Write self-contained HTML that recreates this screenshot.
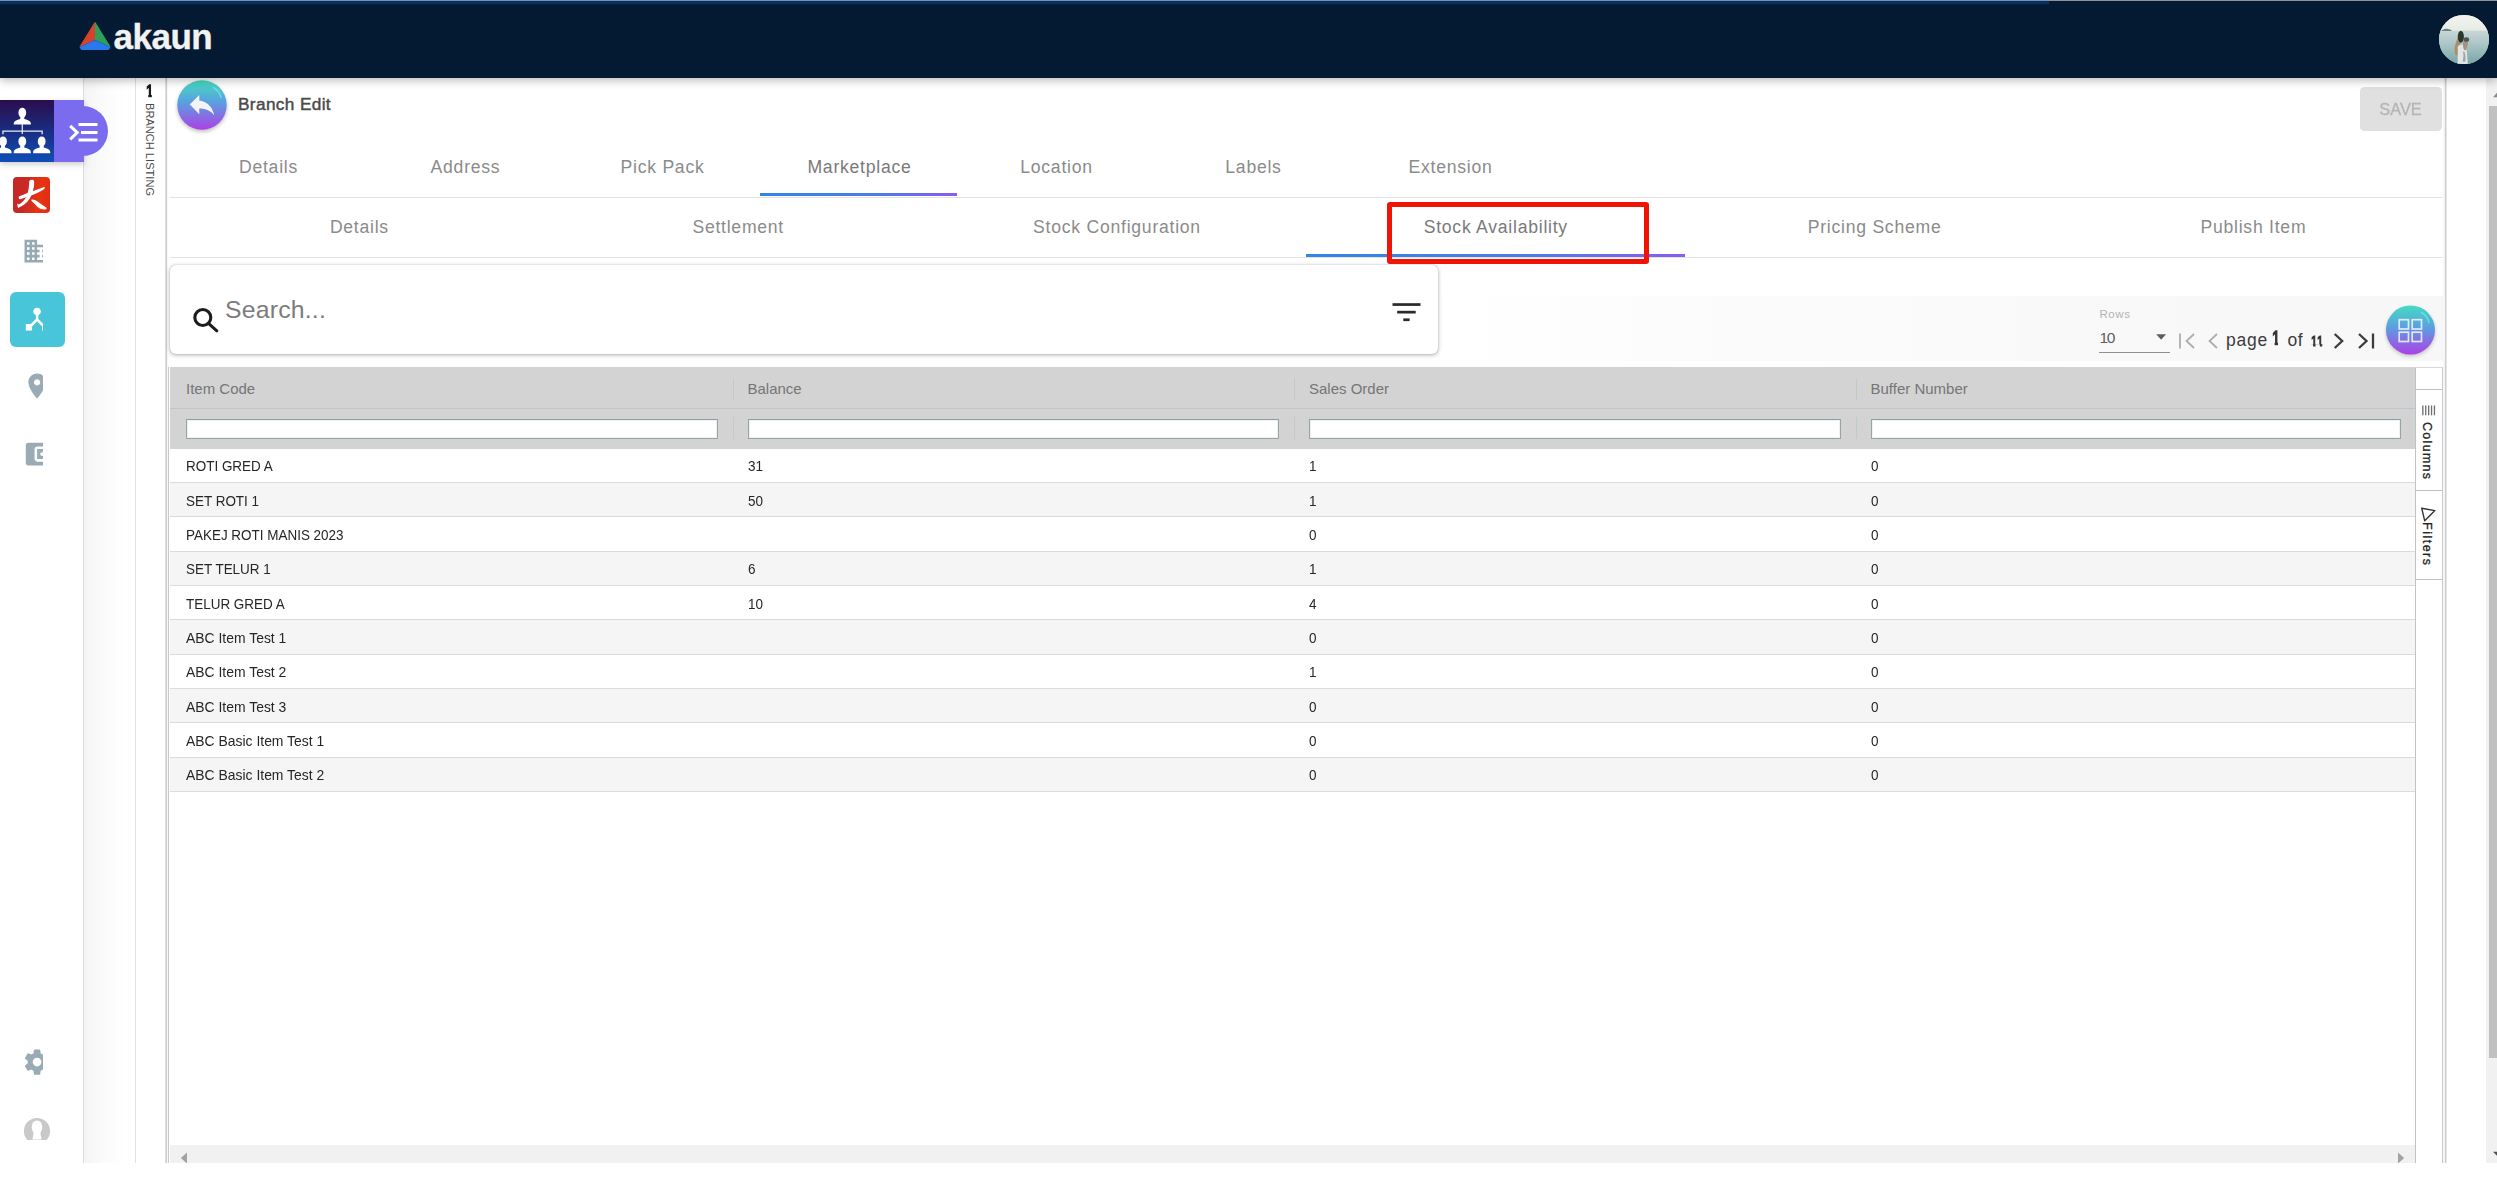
<!DOCTYPE html>
<html lang="en">
<head>
<meta charset="utf-8">
<title>akaun - Branch Edit</title>
<style>
*{box-sizing:border-box;margin:0;padding:0}
html,body{width:2497px;height:1193px;overflow:hidden;background:#fff}
body{position:relative;font-family:"Liberation Sans",sans-serif;color:#333}
.abs{position:absolute}
#app{position:absolute;left:0;top:0;width:2497px;height:1163px;overflow:hidden;background:#fff}
/* top bar */
#topbar{position:absolute;left:0;top:0;width:2497px;height:77.500px;background:#041a33;box-shadow:0 2px 9px rgba(0,0,0,.3);z-index:20}
#loadbar{position:absolute;left:0;top:0;width:2497px;height:1.200px;background:linear-gradient(90deg,#7391bb 0,#7391bb 2048px,#8d939c 2049px)}
#loadbar i{position:absolute;left:0;top:1.200px;width:2048.500px;height:4px;background:linear-gradient(180deg,#092b57 0,#0c3162 40%,#0b2e5b 70%,#051a33 100%)}
#brand{position:absolute;left:113.500px;top:15px;font-weight:bold;font-size:35px;line-height:44px;color:#f2f2f2;-webkit-text-stroke:.35px #f2f2f2;letter-spacing:-.5px}
#avatar{position:absolute;left:2439.300px;top:14.600px;width:49.300px;height:49.300px;border-radius:50%;overflow:hidden;background:#c9d3d4}
/* left rail */
#rail{position:absolute;left:0;top:77px;width:84px;height:1086px;background:#fff;border-right:1px solid #dcdcdc}
#rail2{position:absolute;left:84px;top:77px;width:51px;height:1086px;background:linear-gradient(90deg,#f4f4f4 0,#fbfbfb 20px,#fff 42px)}
#colA{position:absolute;left:135px;top:77px;width:32px;height:1086px;background:#fff;border-left:1px solid #e2e2e2}
#colAline{position:absolute;left:165px;top:77px;width:4px;height:1086px;background:linear-gradient(90deg,#e9e9e9 0,#cfcfcf 1px,#cfcfcf 1.800px,#f2f2f2 2.200px,#fff 3px)}
.vtxt{position:absolute;transform-origin:0 0;transform:rotate(90deg);white-space:nowrap}
/* main */
#main{position:absolute;left:169px;top:77px;width:2274px;height:1086px;background:#fff}
#rline{position:absolute;left:2443px;top:77px;width:4px;height:1086px;background:linear-gradient(90deg,#fafafa 0,#f0f0f0 2px,#cdcdcd 2.400px,#cdcdcd 3.400px,#fff 3.600px)}
#vscroll{position:absolute;left:2486px;top:77px;width:11px;height:1086px;background:#f1f1f1}
#vscroll i{position:absolute;left:2.500px;top:29px;width:9px;height:952px;background:#c1c1c1}
.tab{position:absolute;text-align:center;color:#8b8b8b;font-size:17.6px;letter-spacing:.75px;line-height:24px;white-space:nowrap}
.pgt{line-height:24px;color:#3c3c3c;white-space:nowrap}
.hl{position:absolute;height:1px;background:#e3e3e3}

#grid{position:absolute;left:170px;top:367px;width:2273px;height:796px;font-size:15px;color:#262626}
#ghead{position:absolute;left:0;top:0;width:2245px;height:81.500px;background:#d3d3d3}
#ghead .sep{position:absolute;left:0;top:41px;width:2245px;height:1px;background:#bcc5c9}
.hc{position:absolute;top:10.300px;height:24px;line-height:24px;color:#767676;white-space:nowrap}
.vs{position:absolute;width:1px;background:#c6c9cb}
.fi{position:absolute;top:51.500px;height:20.500px;background:#fff;border:1px solid #95a5a6;border-top-color:#8f9fa3;box-shadow:inset 0 0 0 1px #eef2f3}
.gr{position:absolute;left:0;width:2245px;height:34.350px;border-bottom:1px solid #d9dcde;background:#fff}
.gr.o{background:#f5f5f5}
.gr span{position:absolute;top:.8px;line-height:34px;white-space:nowrap;transform-origin:0 50%}
.gr .u{transform:scaleX(.897)}
.gr .m{transform:scaleX(.928)}
.gr .n{transform:scaleX(.9)}
#side{position:absolute;left:2245px;top:0;width:27.500px;height:796px;border-left:1px solid #bdc3c7;border-right:1px solid #c3c9cd;border-top:1px solid #d5d9dc;background:#fff}
#side .b{position:absolute;left:0;width:25.500px;border-bottom:1px solid #bdc3c7}
</style>
</head>
<body>
<div id="app">

<!-- TOP BAR -->
<div id="topbar">
  <div id="loadbar"><i></i></div>
  <svg class="abs" style="left:78px;top:21px" width="34" height="30" viewBox="0 0 34 30">
    <path d="M17 1.500 Q17 .6 16.200 1.800 L1.700 25.200 Q1.300 26 1.800 26 L17 19 Z" fill="#d4432a"/>
    <path d="M17 1.500 Q17 .6 17.800 1.800 L32.300 25.200 Q32.700 26 32.200 26 L17 19 Z" fill="#2e9e5b"/>
    <path d="M17 19 L32.200 26 Q32.500 26.300 32 27 L31 28.500 Q30.700 29 30 29 L4 29 Q3.300 29 3 28.500 L2 27 Q1.500 26.300 1.800 26 Z" fill="#2878ee"/>
  </svg>
  <div id="brand">akaun</div>
  <div id="avatar">
    <svg width="50" height="50" viewBox="0 0 49 49">
      <defs>
        <linearGradient id="avsky" x1="0" y1="0" x2="0" y2="1"><stop offset="0" stop-color="#f3f3ee"/><stop offset="1" stop-color="#e6ebe6"/></linearGradient>
        <linearGradient id="avsea" x1="0" y1="0" x2="0" y2="1"><stop offset="0" stop-color="#c9d8d8"/><stop offset=".35" stop-color="#aec7c9"/><stop offset=".7" stop-color="#8fb4b5"/><stop offset="1" stop-color="#78a3a1"/></linearGradient>
        <filter id="avb" x="-10%" y="-10%" width="120%" height="120%"><feGaussianBlur stdDeviation=".7"/></filter>
      </defs>
      <rect width="49" height="16" fill="url(#avsky)"/>
      <rect y="15.300" width="49" height="34" fill="url(#avsea)"/>
      <g filter="url(#avb)">
        <path d="M2 15.600c2-1.600 4.500-2.200 6.500-2 1.800.1 3.400.8 4.400 2z" fill="#6d837f"/>
        <path d="M18.500 22c-1.800 4-3.600 9-3.200 14 .2 2.600 1.600 4.200 3 3.600 1.500-3 2.300-9 3-13.600z" fill="#a98f66"/>
        <path d="M18.300 31c1-1.600 3.500-2.200 5.400-1.600 1.600.6 2.800 2 3.300 4.200l1.400 15.400h-10.400c.6-6 .4-12 .3-18z" fill="#e3e4e8"/>
        <path d="M24 25.500c1.500-.6 3.600-.3 4.300 1 .6 1.300-.2 3-.9 4.800-.5 1.500-.4 3-1.400 3.300-1.200.3-2-1.200-2.300-3-.3-2.200-.4-4.800.3-6.100z" fill="#a8917e"/>
        <ellipse cx="21.400" cy="21.300" rx="3" ry="5.900" fill="#2c382f"/>
        <ellipse cx="26.800" cy="24" rx="2.800" ry="2.300" fill="#4a5a56"/>
        <path d="M23.500 36c.8 2.600.6 6-.4 9.500l2.600.2c.6-3.400.2-7-.8-9.800z" fill="#7b8f80" opacity=".7"/>
      </g>
    </svg>
  </div>
</div>

<!-- LEFT RAIL -->
<div id="rail"></div>
<div id="rail2"></div>
<div id="colA"></div>
<div id="colAline"></div>
<div id="rline"></div>
<div id="vscroll"><i></i><svg class="abs" style="left:7px;top:14px" width="4" height="7" viewBox="0 0 4 7"><path d="M0 6.200L4 1.800V6.200z" fill="#8a8a8a"/></svg><svg class="abs" style="left:6.500px;top:1074px" width="5" height="7" viewBox="0 0 5 7"><path d="M0 .8H5V5.800z" fill="#505050"/></svg></div>


<!-- RAIL ICONS -->
<div class="abs" style="left:0;top:100px;width:84px;height:61px;box-shadow:0 3px 6px rgba(0,0,0,.22)"></div>
<div class="abs" style="left:0;top:100px;width:54px;height:61.500px;background:linear-gradient(180deg,#2b0d4d 0,#1b2a7c 45%,#0d4fb6 100%)">
  <svg width="54" height="61" viewBox="0 0 54 61" fill="#fff">
    <g id="pp"><ellipse cx="22.300" cy="12.800" rx="3.900" ry="5"/><path d="M20.300 16h4v3c2.400.7 5.300 1.500 6.100 2.900.5.900.5 2 .5 2.700H13.700c0-.7 0-1.800.5-2.700.8-1.400 3.700-2.200 6.100-2.900z"/></g>
    <use href="#pp" x="0" y="28.600"/><use href="#pp" x="-19.300" y="28.600"/><use href="#pp" x="19.400" y="28.600"/>
    <path d="M21.700 24h1.200v10h-1.200z" opacity=".9"/><path d="M2.300 30.500h40.500v3.800h-1.300v-2.500h-37.900v2.500h-1.300z" opacity=".9"/>
  </svg>
</div>
<div class="abs" style="left:54px;top:100px;width:30px;height:61.500px;background:#7b6cef"></div>
<div class="abs" style="left:58px;top:106px;width:50px;height:50px;border-radius:25px;background:#7b6cef"></div>
<svg class="abs" style="left:68px;top:121px" width="32" height="23" viewBox="0 0 32 23" fill="none" stroke="#fff" stroke-width="3">
  <path d="M2.200 4.800l7 6.800-7 6.800"/><path d="M10.500 3.500h19M13 11.600h16.500M10.500 19h19"/>
</svg>
<!-- red app icon -->
<div class="abs" style="left:13px;top:177px;width:36.500px;height:36px;border-radius:4px;background:linear-gradient(100deg,#c22727 0,#c92a25 35%,#e8340f 70%,#dc2c18 100%);overflow:hidden">
  <svg width="37" height="36" viewBox="0 0 37 36" fill="#fff">
    <path d="M17 3.200C18.500 2.200 21 2.600 21.200 4.400C21.400 8 20.500 13 18.500 18C16.500 23 12.500 27.500 7.500 29.800L5 31L4.200 27.200C4.500 26.600 5.200 26.800 5.600 27.400C8.500 26.500 12 23 13.800 18.500C15.600 14 16.200 8.500 16.200 5C16.200 4.200 16.500 3.600 17 3.200Z"/>
    <path d="M6 19.500C10 17.500 22 13.500 30.500 10.200C31.800 9.800 32.400 10.800 31.400 11.800C27 15.500 14 20.500 7.500 22.200C5.800 22.600 5 20.200 6 19.500Z"/>
    <path d="M18.800 22.600C20 22.200 22.500 23 25 24.800C28 27 31 29.200 33.200 30.600C34 31.200 33.600 32.400 32.400 32.400C29 32.600 26 31.600 24 29.400C22.400 27.600 20.600 25.600 18.800 24.200C18.200 23.600 18.200 22.900 18.800 22.600Z"/>
  </svg>
</div>
<!-- material icons, clipped -->
<svg class="abs" style="left:22.200px;top:235.600px" width="20.500" height="30.200" viewBox="0 0 16.300 24" fill="#97aab4"><path d="M12 7V3H2v18h20V7H12zM6 19H4v-2h2v2zm0-4H4v-2h2v2zm0-4H4V9h2v2zm0-4H4V5h2v2zm4 12H8v-2h2v2zm0-4H8v-2h2v2zm0-4H8V9h2v2zm0-4H8V5h2v2zm10 12h-8v-2h2v-2h-2v-2h2v-2h-2V9h8v10zm-2-8h-2v2h2v-2zm0 4h-2v2h2v-2z"/></svg>
<div class="abs" style="left:10px;top:292px;width:55px;height:55px;border-radius:6px;background:#49c5d9"></div>
<svg class="abs" style="left:22.200px;top:303.900px" width="20.500" height="30.200" viewBox="0 0 16.300 24" fill="#fff"><path d="M17 16l-4-4V8.820C14.160 8.400 15 7.300 15 6c0-1.660-1.340-3-3-3S9 4.340 9 6c0 1.300.84 2.400 2 2.820V12l-4 4H3v5h5v-3.050l4-4.200 4 4.200V21h5v-5h-4z"/></svg>
<svg class="abs" style="left:22.200px;top:370.500px" width="20.500" height="30.200" viewBox="0 0 16.300 24" fill="#9aabb5"><path d="M12 2C8.130 2 5 5.130 5 9c0 5.250 7 13 7 13s7-7.750 7-13c0-3.870-3.130-7-7-7zm0 9.500c-1.380 0-2.500-1.120-2.500-2.500s1.120-2.500 2.500-2.500 2.500 1.120 2.500 2.500-1.120 2.500-2.500 2.500z"/></svg>
<svg class="abs" style="left:22.200px;top:438.800px" width="20.500" height="30.200" viewBox="0 0 16.300 24" fill="#9aabb5"><path d="M21 18v1c0 1.100-.9 2-2 2H5c-1.110 0-2-.9-2-2V5c0-1.100.89-2 2-2h14c1.100 0 2 .9 2 2v1h-9c-1.110 0-2 .9-2 2v8c0 1.100.89 2 2 2h9zm-9-2h10V8H12v8zm4-2.500c-.83 0-1.500-.67-1.500-1.500s.67-1.500 1.500-1.500 1.500.67 1.500 1.500-.67 1.500-1.500 1.500z"/></svg>
<svg class="abs" style="left:22.200px;top:1047.300px" width="20.500" height="30.200" viewBox="0 0 16.300 24" fill="#9aabb5"><path d="M19.430 12.980c.04-.32.070-.64.070-.98s-.03-.66-.07-.98l2.110-1.650c.19-.15.240-.42.120-.64l-2-3.460c-.12-.22-.39-.3-.61-.22l-2.490 1c-.52-.4-1.080-.73-1.690-.98l-.38-2.650C14.460 2.180 14.250 2 14 2h-4c-.25 0-.46.180-.49.420l-.38 2.650c-.61.250-1.170.59-1.690.98l-2.490-1c-.23-.09-.49 0-.61.220l-2 3.460c-.13.220-.07.490.12.640l2.110 1.650c-.04.320-.07.650-.07.980s.03.660.07.980l-2.110 1.650c-.19.150-.24.420-.12.640l2 3.460c.12.220.39.300.61.220l2.490-1c.52.400 1.080.73 1.690.98l.38 2.650c.03.240.24.420.49.420h4c.25 0 .46-.18.490-.42l.38-2.650c.61-.25 1.170-.59 1.690-.98l2.490 1c.23.090.49 0 .61-.22l2-3.460c.12-.22.07-.49-.12-.64l-2.110-1.650zM12 15.500c-1.930 0-3.500-1.570-3.500-3.500s1.570-3.500 3.500-3.500 3.500 1.570 3.500 3.500-1.570 3.500-3.500 3.500z"/></svg>
<!-- user placeholder -->
<svg class="abs" style="left:23px;top:1117px" width="28" height="22.500" viewBox="0 0 28 22.500">
  <circle cx="14" cy="14" r="13.100" fill="#c9c9c9"/>
  <ellipse cx="14" cy="10" rx="5.300" ry="6.600" fill="#fff"/>
  <path d="M10.300 13.500h7.400c0 2-.3 3.800.2 5.400.3 1.200.6 2.400.4 3.600h-8.600c-.2-1.200.1-2.400.4-3.600.5-1.600.2-3.400.2-5.400z" fill="#fff"/>
</svg>
<!-- vertical breadcrumb -->
<div class="abs" style="left:146px;top:83.300px;font-size:16.500px;line-height:16px;color:#1a1a1a;-webkit-text-stroke:1.400px #1a1a1a;transform:scaleX(.8);transform-origin:0 50%;clip-path:polygon(0 0,100% 0,100% 10.500px,7.300px 10.500px,7.300px 13.900px,2.800px 13.900px,2.800px 10.500px,0 10.500px)">1</div>
<div class="vtxt" style="left:156px;top:103px;font-size:11px;line-height:13px;color:#4a4a4a;letter-spacing:.05px">BRANCH LISTING</div>


<!-- MAIN -->
<div id="main"></div>

<!-- HEADER OF PANEL -->
<svg class="abs" style="left:170px;top:74px" width="64" height="66" viewBox="0 0 64 66">
  <defs>
    <linearGradient id="gbtn" x1="0" y1="0" x2="0" y2="1"><stop offset="0" stop-color="#44dcc0"/><stop offset=".45" stop-color="#5b9fe0"/><stop offset="1" stop-color="#ae3fe6"/></linearGradient>
    <filter id="sh" x="-30%" y="-30%" width="160%" height="170%"><feGaussianBlur stdDeviation="2"/></filter>
  </defs>
  <circle cx="32" cy="33" r="24.500" fill="#000" opacity=".28" filter="url(#sh)"/>
  <circle cx="32" cy="31" r="24.700" fill="url(#gbtn)"/>
  <path d="M43.500 13.500c4 2.200 6.500 5.800 7.500 10" fill="none" stroke="#7ff0e6" stroke-width="1.500" opacity=".6" stroke-linecap="round"/>
  <g transform="translate(15.700,14.300) scale(1.360)" fill="#f4f4f6"><path d="M10 9V5l-7 7 7 7v-4.100c5 0 8.500 1.600 11 5.100-1-5-4-10-11-11z"/></g>
</svg>
<div class="abs" style="left:238px;top:91px;font-size:17.200px;line-height:26px;color:#4a4a4a;-webkit-text-stroke:.45px #4a4a4a;letter-spacing:.38px;white-space:nowrap" id="title">Branch Edit</div>
<div class="abs" style="left:2360px;top:87.200px;width:82px;height:43.500px;border-radius:4.500px;background:#e0e0e0;color:#b4b4b4;-webkit-text-stroke:.3px #b4b4b4;font-size:16.600px;line-height:45.500px;text-align:center"><span style="display:inline-block;transform:scaleX(.985)">SAVE</span></div>

<!-- TAB ROW 1 -->
<div class="tab" style="left:170px;top:155px;width:197px">Details</div>
<div class="tab" style="left:367px;top:155px;width:197px">Address</div>
<div class="tab" style="left:564px;top:155px;width:197px">Pick Pack</div>
<div class="tab" style="left:761px;top:155px;width:197px;color:#7a7a7a">Marketplace</div>
<div class="tab" style="left:958px;top:155px;width:197px">Location</div>
<div class="tab" style="left:1155px;top:155px;width:197px">Labels</div>
<div class="tab" style="left:1352px;top:155px;width:197px">Extension</div>
<div class="hl" style="left:170px;top:197px;width:2272.500px"></div>
<div class="abs" style="left:760px;top:193px;width:197px;height:3px;background:linear-gradient(90deg,#2f86e6 0,#4d7be8 60%,#8b5cf0 100%)"></div>

<!-- TAB ROW 2 -->
<div class="tab" style="left:170px;top:215.300px;width:378.800px">Details</div>
<div class="tab" style="left:548.800px;top:215.300px;width:378.800px">Settlement</div>
<div class="tab" style="left:927.600px;top:215.300px;width:378.800px">Stock Configuration</div>
<div class="tab" style="left:1306.400px;top:215.300px;width:378.800px;color:#7a7a7a">Stock Availability</div>
<div class="tab" style="left:1685.200px;top:215.300px;width:378.800px">Pricing Scheme</div>
<div class="tab" style="left:2064px;top:215.300px;width:378.800px">Publish Item</div>
<div class="hl" style="left:170px;top:257px;width:2272.500px"></div>
<div class="abs" style="left:1306px;top:254px;width:378.500px;height:3px;background:linear-gradient(90deg,#2f86e6 0,#4d7be8 60%,#8b5cf0 100%)"></div>
<div class="abs" style="left:1387px;top:202px;width:262px;height:62px;border:5px solid #ef1405;border-radius:3px;z-index:5"></div>

<!-- SEARCH CARD -->
<div class="abs" style="left:170px;top:265px;width:1268px;height:89px;background:#fff;border-radius:6px;box-shadow:0 1px 4px rgba(0,0,0,.32),0 0 1px rgba(0,0,0,.25);z-index:3">
  <svg class="abs" style="left:21px;top:41px" width="30" height="28" viewBox="0 0 30 28" fill="none" stroke="#1c1c1c" stroke-width="3.100" stroke-linecap="round">
    <circle cx="11.800" cy="11.500" r="8"/><path d="M17.800 17.600l8 7.200"/>
  </svg>
  <div class="abs" style="left:55px;top:29px;font-size:24.800px;line-height:32px;color:#7c7c7c;letter-spacing:.2px;white-space:nowrap" id="srch">Search...</div>
  <svg class="abs" style="left:1221px;top:37px" width="32" height="22" viewBox="0 0 32 22" fill="#2a2a2a">
    <rect x="1.500" y="1.200" width="28" height="2.700"/><rect x="6.200" y="8.800" width="18.500" height="2.700"/><rect x="12.300" y="16.400" width="6.300" height="2.700"/>
  </svg>
</div>

<!-- PAGINATOR -->
<div class="abs" style="left:1440px;top:295.500px;width:1005px;height:65.300px;background:linear-gradient(90deg,#fff 0,#fcfcfc 250px,#f9f9f9 600px,#f7f7f7 100%)"></div>
<div class="abs" style="left:2099.500px;top:307px;font-size:11.500px;line-height:14px;color:#b4b4b4;letter-spacing:.55px">Rows</div>
<div class="abs" style="left:2099.500px;top:327.500px;font-size:15.500px;line-height:20px;color:#5e5e5e;letter-spacing:-1.300px">10</div>
<div class="abs" style="left:2099px;top:352px;width:71px;height:1px;background:#8f8f8f"></div>
<svg class="abs" style="left:2156px;top:333.500px" width="11" height="7" viewBox="0 0 11 7"><path d="M.3 .3h9.700l-4.850 5.400z" fill="#5c5c5c"/></svg>
<svg class="abs" style="left:2176px;top:330px" width="204" height="22" viewBox="0 0 204 22" fill="none" stroke-width="2">
  <g stroke="#adadad" stroke-width="1.800"><path d="M4 3.500v15"/><path d="M18 4l-7.500 7 7.500 7"/><path d="M41 4l-7.500 7 7.500 7"/></g>
  <g stroke="#3c3c3c" stroke-width="2.300"><path d="M158.700 4l7.500 7-7.500 7"/><path d="M183 4l7.500 7-7.500 7"/><path d="M197 3.500v15"/></g>
</svg>
<div class="abs pgt" style="left:2226px;top:328px;font-size:17.500px;letter-spacing:.75px">page</div>
<div class="abs pgt" style="left:2271.500px;top:325.500px;font-size:20px;-webkit-text-stroke:1.500px #333;transform:scaleX(.72);transform-origin:0 50%;clip-path:polygon(0 0,100% 0,100% 16.300px,8.300px 16.300px,8.300px 19.700px,3.600px 19.700px,3.600px 16.300px,0 16.300px)">1</div>
<div class="abs pgt" style="left:2287.500px;top:328px;font-size:17.500px;letter-spacing:.4px">of</div>
<div class="abs pgt" style="left:2311px;top:328.500px;font-size:15.500px;-webkit-text-stroke:1.200px #333;letter-spacing:1px;transform:scaleX(.72);transform-origin:0 50%;clip-path:polygon(0 0,100% 0,100% 15.800px,15.600px 15.800px,15.600px 18.500px,12.200px 18.500px,12.200px 15.800px,6.300px 15.800px,6.300px 18.500px,2.900px 18.500px,2.900px 15.800px,0 15.800px)">11</div>
<svg class="abs" style="left:2380px;top:298.700px" width="62" height="64" viewBox="0 0 62 64">
  <circle cx="30.500" cy="33" r="24" fill="#000" opacity=".25" filter="url(#sh)"/>
  <circle cx="30.500" cy="31" r="24.500" fill="url(#gbtn)"/>
  <path d="M41.500 13.500c4 2.200 6.500 5.800 7.500 10" fill="none" stroke="#7ff0e6" stroke-width="1.500" opacity=".6" stroke-linecap="round"/>
  <g fill="none" stroke="#f4f4f8" stroke-opacity=".88" stroke-width="1.700"><rect x="19.200" y="20.700" width="9.300" height="9.300"/><rect x="32.200" y="20.700" width="9.300" height="9.300"/><rect x="19.200" y="33.200" width="9.300" height="9.300"/><rect x="32.200" y="33.200" width="9.300" height="9.300"/></g>
</svg>

<div class="abs" style="left:168.300px;top:367px;width:1.200px;height:796px;background:#c5cacd"></div>
<div id="grid">
<div id="ghead">
<div class="hc" style="left:16px">Item Code</div>
<div class="fi" style="left:16px;width:531.5px"></div>
<div class="hc" style="left:577.5px">Balance</div>
<div class="fi" style="left:577.5px;width:531.5px"></div>
<div class="vs" style="left:562.5px;top:11px;height:22px"></div>
<div class="vs" style="left:562.5px;top:50px;height:22px"></div>
<div class="hc" style="left:1139px">Sales Order</div>
<div class="fi" style="left:1139px;width:531.5px"></div>
<div class="vs" style="left:1124px;top:11px;height:22px"></div>
<div class="vs" style="left:1124px;top:50px;height:22px"></div>
<div class="hc" style="left:1700.5px">Buffer Number</div>
<div class="fi" style="left:1700.5px;width:530.5px"></div>
<div class="vs" style="left:1685.5px;top:11px;height:22px"></div>
<div class="vs" style="left:1685.5px;top:50px;height:22px"></div>
<div class="sep"></div></div>
<div class="gr" style="top:81.50px"><span class="u" style="left:16px">ROTI GRED A</span><span class="n" style="left:577.5px">31</span><span class="n" style="left:1139px">1</span><span class="n" style="left:1700.5px">0</span></div>
<div class="gr o" style="top:115.85px"><span class="u" style="left:16px">SET ROTI 1</span><span class="n" style="left:577.5px">50</span><span class="n" style="left:1139px">1</span><span class="n" style="left:1700.5px">0</span></div>
<div class="gr" style="top:150.20px"><span class="u" style="left:16px">PAKEJ ROTI MANIS 2023</span><span class="n" style="left:1139px">0</span><span class="n" style="left:1700.5px">0</span></div>
<div class="gr o" style="top:184.55px"><span class="u" style="left:16px">SET TELUR 1</span><span class="n" style="left:577.5px">6</span><span class="n" style="left:1139px">1</span><span class="n" style="left:1700.5px">0</span></div>
<div class="gr" style="top:218.90px"><span class="u" style="left:16px">TELUR GRED A</span><span class="n" style="left:577.5px">10</span><span class="n" style="left:1139px">4</span><span class="n" style="left:1700.5px">0</span></div>
<div class="gr o" style="top:253.25px"><span class="m" style="left:16px">ABC Item Test 1</span><span class="n" style="left:1139px">0</span><span class="n" style="left:1700.5px">0</span></div>
<div class="gr" style="top:287.60px"><span class="m" style="left:16px">ABC Item Test 2</span><span class="n" style="left:1139px">1</span><span class="n" style="left:1700.5px">0</span></div>
<div class="gr o" style="top:321.95px"><span class="m" style="left:16px">ABC Item Test 3</span><span class="n" style="left:1139px">0</span><span class="n" style="left:1700.5px">0</span></div>
<div class="gr" style="top:356.30px"><span class="m" style="left:16px">ABC Basic Item Test 1</span><span class="n" style="left:1139px">0</span><span class="n" style="left:1700.5px">0</span></div>
<div class="gr o" style="top:390.65px"><span class="m" style="left:16px">ABC Basic Item Test 2</span><span class="n" style="left:1139px">0</span><span class="n" style="left:1700.5px">0</span></div>
<div class="abs" style="left:0;top:777.500px;width:2245px;height:18.500px;background:#f1f1f1"></div>
<svg class="abs" style="left:10px;top:784.500px" width="8" height="12" viewBox="0 0 8 12"><path d="M7 .5v11L.8 6z" fill="#a3a3a3"/></svg>
<svg class="abs" style="left:2227px;top:784.500px" width="8" height="12" viewBox="0 0 8 12"><path d="M1 .5v11L7.200 6z" fill="#a3a3a3"/></svg>
<div id="side"><div class="b" style="top:0;height:22px"></div><div class="b" style="top:22px;height:100.500px"></div><div class="b" style="top:122.500px;height:89px"></div>
<svg class="abs" style="left:4.500px;top:36.500px" width="15" height="11" viewBox="0 0 15 11" fill="#6e6e6e"><rect x="1.200" y=".5" width="1.300" height="9.800"/><rect x="4.100" y=".5" width="1.300" height="9.800"/><rect x="7" y=".5" width="1.300" height="9.800"/><rect x="9.900" y=".5" width="1.300" height="9.800"/><rect x="12.800" y=".5" width="1.300" height="9.800"/></svg>
<div class="vtxt" style="left:17.500px;top:53.800px;font-size:12.500px;line-height:14px;color:#222;-webkit-text-stroke:.3px #222;letter-spacing:1.300px">Columns</div>
<svg class="abs" style="left:4px;top:138px" width="16" height="16" viewBox="0 0 16 16" fill="none" stroke="#333" stroke-width="1.400" stroke-linejoin="round"><path d="M1.700 2.200L14.900 4.600L4.700 14.800z"/></svg>
<div class="vtxt" style="left:17.500px;top:153.800px;font-size:12.500px;line-height:14px;color:#222;-webkit-text-stroke:.3px #222;letter-spacing:1.500px">Filters</div>
</div>
</div>

</div>
</body>
</html>
